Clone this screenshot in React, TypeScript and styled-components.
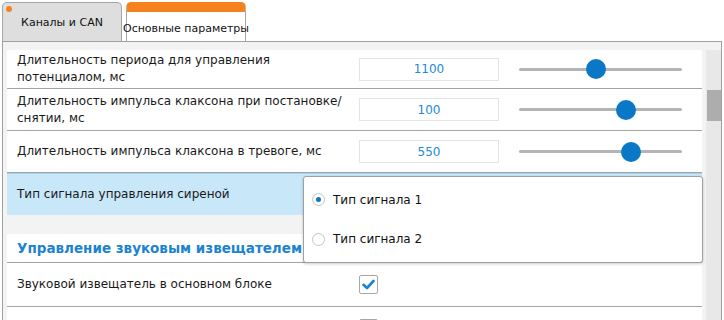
import styled, { createGlobalStyle } from "styled-components";

const GlobalStyle = createGlobalStyle`
  html, body {
    margin: 0;
    padding: 0;
    background: #fff;
  }
  body {
    font-family: "DejaVu Sans", "Noto Sans", sans-serif;
    color: #1a1a1a;
  }
`;

const Screen = styled.div`
  width: 724px;
  height: 320px;
  overflow: hidden;
  padding-top: 2px;
  box-sizing: border-box;
  background: #fff;
`;

const TabBar = styled.div`
  display: flex;
  gap: 4px;
  padding-left: 2px;
  height: 39px;
`;

const Tab = styled.div<{ $active?: boolean }>`
  position: relative;
  width: 120px;
  box-sizing: border-box;
  border: 1px solid #a6a6a6;
  border-bottom: none;
  border-radius: 5px 5px 0 0;
  background: ${(p) => (p.$active ? "#fff" : "#dedede")};
  border-top: ${(p) => (p.$active ? "10px solid #f5821f" : "1px solid #a6a6a6")};
  display: flex;
  align-items: center;
  justify-content: center;
  padding-top: ${(p) => (p.$active ? "4px" : "0")};
  font-size: 11px;
  white-space: nowrap;
  color: #111;
`;

const Dot = styled.span`
  position: absolute;
  left: 3px;
  top: 3px;
  width: 6px;
  height: 6px;
  border-radius: 50%;
  background: #f5821f;
`;

const Panel = styled.div`
  margin-left: 2px;
  width: 720px;
  height: 290px;
  box-sizing: border-box;
  border: 1px solid #a0a0a0;
  border-bottom: none;
  background: #f3f3f3;
  padding: 8px 0 0 4px;
  display: flex;
  gap: 4px;
  overflow: hidden;
`;

const Content = styled.div`
  width: 696px;
  display: flex;
  flex-direction: column;
  & > * {
    flex-shrink: 0;
  }
`;

const Group = styled.div`
  background: #fff;
  display: flex;
  flex-direction: column;
  & > * {
    flex-shrink: 0;
  }
`;

const Row = styled.div<{ $h: number; $hl?: boolean }>`
  position: relative;
  height: ${(p) => p.$h}px;
  display: grid;
  grid-template-columns: 342px 140px 183px;
  align-items: center;
  padding-left: 10px;
  border-bottom: 1px solid ${(p) => (p.$hl ? "#a9d2ee" : "#a3a3a3")};
  background: ${(p) => (p.$hl ? "#c8e7f9" : "#fff")};
  ${(p) => (p.$hl ? "border-top: 1px solid #a9d2ee; border-bottom: none;" : "")}
`;

const Label = styled.div`
  font-size: 12px;
  line-height: 17px;
  color: #1a1a1a;
  white-space: nowrap;
`;

const NumberBox = styled.div`
  height: 23px;
  box-sizing: border-box;
  border: 1px solid #e4e4e4;
  display: flex;
  align-items: center;
  justify-content: center;
  font-size: 12px;
  color: #2389d6;
`;

const Slider = styled.div`
  position: relative;
  margin-left: 20px;
  height: 20px;
  display: flex;
  align-items: center;
`;

const Track = styled.div`
  width: 100%;
  height: 3px;
  border-radius: 2px;
  background: #b4b4b4;
`;

const Thumb = styled.div`
  position: absolute;
  top: 0;
  width: 20px;
  height: 20px;
  margin-left: -10px;
  border-radius: 50%;
  background: #0a78c6;
`;

const Gap = styled.div`
  height: 19px;
`;

const SectionTitle = styled.div`
  height: 28px;
  display: flex;
  align-items: center;
  padding-left: 10px;
  font-size: 13.5px;
  font-weight: bold;
  color: #1b83d0;
  border-bottom: 1px solid #a3a3a3;
  white-space: nowrap;
`;

const Check = styled.div`
  width: 19px;
  height: 19px;
  box-sizing: border-box;
  border: 1px solid #a8a8a8;
  border-radius: 2px;
  background: #fff;
  display: flex;
  align-items: center;
  justify-content: center;
`;

const Popup = styled.div`
  position: absolute;
  left: 296px;
  top: 2px;
  width: 400px;
  height: 87px;
  box-sizing: border-box;
  background: #fff;
  border: 1px solid #a0a0a0;
  border-radius: 3px;
  box-shadow: 0 1px 3px rgba(0, 0, 0, 0.2);
  display: flex;
  flex-direction: column;
  justify-content: space-around;
  padding: 3px 0 3px 8px;
  z-index: 5;
`;

const Option = styled.div`
  display: flex;
  align-items: center;
  gap: 8px;
  font-size: 12px;
  color: #111;
`;

const Radio = styled.span<{ $on?: boolean }>`
  width: 13px;
  height: 13px;
  box-sizing: border-box;
  border-radius: 50%;
  border: 1px solid #c4c4c4;
  display: flex;
  align-items: center;
  justify-content: center;
  &::after {
    content: "";
    width: 5px;
    height: 5px;
    border-radius: 50%;
    background: ${(p) => (p.$on ? "#0a78c6" : "transparent")};
  }
`;

const ScrollTrack = styled.div`
  width: 15px;
  background: #e8e8e8;
  padding-top: 40px;
`;

const ScrollThumb = styled.div`
  height: 31px;
  margin-left: 1px;
  background: #adadad;
`;

const params = [
  { label: ["Длительность периода для управления", "потенциалом, мс"], value: "1100", pos: 0.47, h: 38 },
  { label: ["Длительность импульса клаксона при постановке/", "снятии, мс"], value: "100", pos: 0.655, h: 41 },
  { label: ["Длительность импульса клаксона в тревоге, мс"], value: "550", pos: 0.685, h: 41 },
];

const Tick = () => (
  <svg width="13" height="11" viewBox="0 0 13 11">
    <path d="M1.5 5.8 L5 9 L11.5 2" fill="none" stroke="#1b83d0" strokeWidth="2.6" strokeLinecap="round" strokeLinejoin="round" />
  </svg>
);

const App = () => {
  return (
    <Screen>
      <GlobalStyle />
      <TabBar>
        <Tab>
          <Dot />
          Каналы и CAN
        </Tab>
        <Tab $active>Основные параметры</Tab>
      </TabBar>
      <Panel>
        <Content>
          <Group>
            {params.map((p) => (
              <Row key={p.value} $h={p.h}>
                <Label>
                  {p.label.map((l) => (
                    <div key={l}>{l}</div>
                  ))}
                </Label>
                <NumberBox>{p.value}</NumberBox>
                <Slider>
                  <Track />
                  <Thumb style={{ left: `${p.pos * 100}%` }} />
                </Slider>
              </Row>
            ))}
            <Row $h={41} $hl>
              <Label>Тип сигнала управления сиреной</Label>
              <Popup>
                <Option>
                  <Radio $on />
                  Тип сигнала 1
                </Option>
                <Option>
                  <Radio />
                  Тип сигнала 2
                </Option>
              </Popup>
            </Row>
          </Group>
          <Gap />
          <Group>
            <SectionTitle>Управление звуковым извещателем</SectionTitle>
            <Row $h={43}>
              <Label>Звуковой извещатель в основном блоке</Label>
              <Check>
                <Tick />
              </Check>
            </Row>
            <Row $h={43}>
              <Label />
              <Check />
            </Row>
          </Group>
        </Content>
        <ScrollTrack>
          <ScrollThumb />
        </ScrollTrack>
      </Panel>
    </Screen>
  );
};

export default App;
